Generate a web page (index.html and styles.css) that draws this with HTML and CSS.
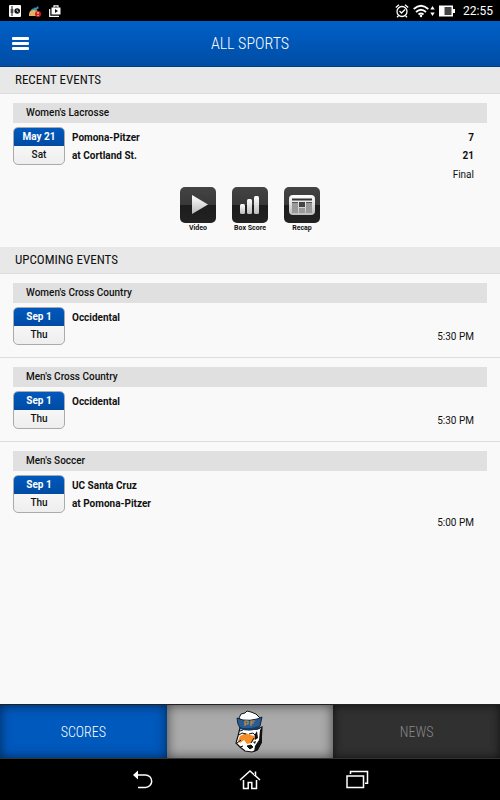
FILE: index.html
```html
<!DOCTYPE html>
<html lang="en">
  <head>
    <meta charset="utf-8">
    <meta name="viewport" content="width=device-width, initial-scale=1">
    <title>All Sports</title>
    <link rel="stylesheet" href="styles.css">
  </head>
  <body>
    <div class="status-bar">
      <div class="status-icons">
        <svg width="12" height="12" viewBox="0 0 12 12">
          <rect width="12" height="12" rx="1" fill="#fff"/>
          <path d="M3 1v10M1.500 5h3M1.500 7h3" stroke="#111" fill="none"/>
          <circle cx="8.200" cy="6" r="2.800" fill="#111"/>
          <path d="M8 4.500V6l1.500 1" stroke="#fff" stroke-width=".8" fill="none"/>
        </svg>
        <svg width="12" height="12" viewBox="0 0 12 12">
          <path d="M0 11Q-.5 5 5 4.500Q11 5 10 11z" fill="#dfb468"/>
          <path d="M2.500 5q3-2 4.500 0l2-3.500M5 3.500L9.500 3" stroke="#3b91ad" stroke-width="1.500" fill="none"/>
          <circle cx="9" cy="9" r="3" fill="#d81e18"/>
          <path d="M9 7v2M9 10v1" stroke="#fff"/>
        </svg>
        <svg width="12" height="12" viewBox="0 0 12 12">
          <path d="M2.500 2.500h9v7h-9z" fill="#fff"/>
          <path d="M5 2.500V.8h4v1.700M.7 4v7.300H10" stroke="#fff" stroke-width="1.200" fill="none"/>
          <path d="M6 4l3 2-3 2z" fill="#111"/>
        </svg>
      </div>
      <div class="status-icons status-right">
        <svg width="14" height="14" viewBox="0 0 14 14" fill="none" stroke="#fff" stroke-width="1.300">
          <circle cx="7" cy="7.500" r="5"/>
          <path d="M.8 3.500L4 .8M10 .8l3.200 2.700M2 13.300l1.500-1.500M12 13.300l-1.500-1.500M4.500 7l2 2L10 5.500"/>
        </svg>
        <svg width="16" height="14" viewBox="0 0 16 14" fill="none" stroke="#fff" stroke-width="1.700">
          <path d="M.7 5Q8-1.500 15.300 5M3 8q5-4.500 10 0M5.500 10.500q2.500-2 5 0"/>
          <circle cx="8" cy="12" r="1.200" fill="#fff" stroke="none"/>
        </svg>
        <svg class="data-arrows" width="5" height="10" viewBox="0 0 5 10" fill="#fff">
          <path d="M2.500 0L4.700 3.500H.3zM2.500 10L.3 6.500h4.400z"/>
        </svg>
        <svg width="16" height="12" viewBox="0 0 16 12">
          <path d="M0 .5h14V4h2v4h-2v3.500H0z" fill="#fff"/>
          <path d="M5.500 2h7v8h-7z" fill="#444"/>
        </svg>
        <span class="clock">22:55</span>
      </div>
    </div>

    <header class="header">
      <button class="menu-btn" aria-label="Menu">
        <span class="menu-line"></span>
        <span class="menu-line"></span>
        <span class="menu-line"></span>
      </button>
      <h1 class="title">ALL SPORTS</h1>
    </header>

    <main class="content">
      <section>
        <h2 class="section-title">RECENT EVENTS</h2>
        <div class="event">
          <h3 class="sport">Women's Lacrosse</h3>
          <div class="event-row">
            <div class="date">
              <div class="date-day">May 21</div>
              <div class="date-week">Sat</div>
            </div>
            <div class="game">
              <div class="team"><span>Pomona-Pitzer</span><span>7</span></div>
              <div class="team"><span>at Cortland St.</span><span>21</span></div>
              <div class="game-info">Final</div>
            </div>
          </div>
          <div class="actions">
            <button class="action">
              <span class="action-icon">
                <svg width="36" height="36" viewBox="0 0 36 36">
                  <path d="M12 8l16 9.500L12 27z" fill="url(#silver)"/>
                </svg>
              </span>
              Video
            </button>
            <button class="action">
              <span class="action-icon">
                <svg width="36" height="36" viewBox="0 0 36 36" fill="url(#silver)">
                  <rect x="8" y="17" width="5" height="10" rx="1.500"/>
                  <rect x="15" y="12" width="5" height="15" rx="1.500"/>
                  <rect x="22" y="9" width="5" height="18" rx="1.500"/>
                </svg>
              </span>
              Box Score
            </button>
            <button class="action">
              <span class="action-icon">
                <svg width="36" height="36" viewBox="0 0 36 36">
                  <defs>
                    <linearGradient id="silver" x2="0" y2="1">
                      <stop offset="0" stop-color="#fff"/>
                      <stop offset="1" stop-color="#bbb"/>
                    </linearGradient>
                  </defs>
                  <rect x="5" y="8" width="26" height="20" rx="4" fill="url(#silver)"/>
                  <path d="M8 12.500h20" stroke="#333" stroke-width="2"/>
                  <path d="M8 15h6v11H8zM22 15h6v11h-6z" fill="#999"/>
                  <path d="M15 15h6v5h-6z" fill="#444"/>
                  <path d="M15 21h6v5h-6z" fill="#999"/>
                  <path d="M8 15.500h6M22 15.500h6" stroke="#555"/>
                </svg>
              </span>
              Recap
            </button>
          </div>
        </div>
      </section>

      <section>
        <h2 class="section-title">UPCOMING EVENTS</h2>
        <div class="event">
          <h3 class="sport">Women's Cross Country</h3>
          <div class="event-row">
            <div class="date">
              <div class="date-day">Sep 1</div>
              <div class="date-week">Thu</div>
            </div>
            <div class="game">
              <div class="team"><span>Occidental</span></div>
              <div class="game-info">5:30 PM</div>
            </div>
          </div>
        </div>
        <div class="event">
          <h3 class="sport">Men's Cross Country</h3>
          <div class="event-row">
            <div class="date">
              <div class="date-day">Sep 1</div>
              <div class="date-week">Thu</div>
            </div>
            <div class="game">
              <div class="team"><span>Occidental</span></div>
              <div class="game-info">5:30 PM</div>
            </div>
          </div>
        </div>
        <div class="event">
          <h3 class="sport">Men's Soccer</h3>
          <div class="event-row">
            <div class="date">
              <div class="date-day">Sep 1</div>
              <div class="date-week">Thu</div>
            </div>
            <div class="game">
              <div class="team"><span>UC Santa Cruz</span></div>
              <div class="team"><span>at Pomona-Pitzer</span></div>
              <div class="game-info">5:00 PM</div>
            </div>
          </div>
        </div>
      </section>
    </main>

    <nav class="tabs">
      <button class="tab tab-active">SCORES</button>
      <button class="tab tab-logo" aria-label="Home">
        <svg width="30" height="44" viewBox="0 0 30 44">
          <path d="M5 18L3 26 1 33l4 4 5 4 7 1 5-2 4-7 1-16-4 2z" fill="#fff" stroke="#111" stroke-width="1.200"/>
          <path d="M25 20l2-3v15l-4 8-4 2 1-6 4-6z" fill="#111"/>
          <path d="M22 21q-4 5-2 9l3-2zM18 32l3-1-1 3z" fill="#111"/>
          <path d="M3 31l2-5 6-3 4 2 5 1-1 4-3 3-4 1-3-4-4 3z" fill="#f58e28"/>
          <path d="M4 25l3-2 4 1M14 24l4-1 2 2M5 21l3-1M19 28l-3 5" stroke="#111" fill="none"/>
          <path d="M2 33l4-3M5 37l3-1M12 36l4-1 2 2-3 2z" stroke="#111" fill="#111"/>
          <path d="M4 8l2-4 4-1 2-2 4 1 5 2 4 4-3 3H7z" fill="#fff" stroke="#111"/>
          <path d="M2 8l6 2q7 1 14-1l5-2-2 9-2 3q-9 2-18-1l-2-4z" fill="#285c93" stroke="#17243a"/>
          <path d="M4 17q9 3 20-1l-1 3q-9 3-18 0z" fill="#17385f"/>
          <path d="M10 16v-5h3v3h-3M16 16v-5h4M16 13h3" fill="none" stroke="#c79245" stroke-width="1.200"/>
        </svg>
      </button>
      <button class="tab tab-news">NEWS</button>
    </nav>

    <div class="nav-bar">
      <button class="nav-btn" aria-label="Back">
        <svg width="24" height="22" viewBox="0 0 24 22">
          <path d="M5 6h9.500a6.200 6.200 0 0 1 0 12.400H7" fill="none" stroke="#fff" stroke-width="1.500"/>
          <path d="M2 6l5-4.500v9z" fill="#fff"/>
        </svg>
      </button>
      <button class="nav-btn" aria-label="Home">
        <svg width="24" height="22" viewBox="0 0 24 22" fill="none" stroke="#fff" stroke-width="1.500">
          <path d="M2 11l10-9 10 9M5.500 11v8.500h4.700v-6h3.600v6h4.700V11M17.500 6.500V2.500"/>
        </svg>
      </button>
      <button class="nav-btn" aria-label="Recent apps">
        <svg width="24" height="22" viewBox="0 0 24 22" fill="none" stroke="#fff" stroke-width="1.500">
          <path d="M2 7h16.500v11.500H2zM5.500 5V2.500h17v11.800H20"/>
        </svg>
      </button>
    </div>
  </body>
</html>
```

FILE: styles.css
```css
* {
  box-sizing: border-box;
}
body {
  margin: 0;
  min-height: 100vh;
  display: flex;
  flex-direction: column;
  background-color: #f9f9f9;
  color: #111;
  font-family: Roboto, "Liberation Sans", sans-serif;
  font-size: 10px;
}
button {
  border: none;
  padding: 0;
  background: none;
  color: inherit;
  font-family: inherit;
}
svg {
  display: block;
}
.title,
.section-title,
.tab {
  font-family: "Roboto Condensed", "Liberation Sans Narrow", Roboto, sans-serif;
  font-weight: normal;
}
.status-bar {
  height: 21px;
  padding: 0 7px 0 9px;
  display: flex;
  align-items: center;
  justify-content: space-between;
  background-color: #000;
  color: #fff;
}
.status-icons {
  display: flex;
  align-items: center;
  gap: 8px;
}
.status-right {
  gap: 4px;
}
.data-arrows {
  margin-left: -3px;
}
.clock {
  margin-left: 4px;
  font-size: 12px;
}
.header {
  height: 46px;
  padding: 0 12px;
  display: grid;
  grid-template-columns: 24px 1fr 24px;
  align-items: center;
  background-image: linear-gradient(#0060c8, #004da5);
  border-bottom: 1px solid #053c7c;
  color: #fff;
}
.menu-btn {
  height: 24px;
  display: flex;
  flex-direction: column;
  justify-content: center;
  gap: 2px;
}
.menu-line {
  width: 17px;
  height: 3px;
  border-radius: 1px;
  background-color: #fff;
}
.title {
  margin: 0;
  font-size: 16px;
  font-weight: 300;
  text-align: center;
}
.content {
  flex: 1;
}
.section-title {
  margin: 0;
  padding: 0 15px;
  height: 27px;
  line-height: 25px;
  font-size: 13px;
  background-color: #e8e8e8;
  border-bottom: 1px solid #dcdcdc;
}
.event {
  padding: 9px 13px 11px;
}
.event + .event {
  border-top: 1px solid #ddd;
}
.sport {
  margin: 0 0 4px;
  padding: 0 13px;
  font-size: 10px;
  line-height: 20px;
  font-weight: 500;
  background-color: #e0e0e0;
}
.event-row {
  display: flex;
  align-items: flex-start;
  gap: 7px;
}
.date {
  width: 52px;
  height: 38px;
  border: 1px solid #aaa;
  border-radius: 5px;
  overflow: hidden;
  text-align: center;
  line-height: 18px;
  font-weight: 500;
  background-image: linear-gradient(#fff, #eee);
}
.date-day {
  background-image: linear-gradient(#0059bd, #004ba3);
  color: #fff;
  font-weight: bold;
}
.game {
  flex: 1;
  padding: 2px 13px 0 0;
  line-height: 18px;
}
.team {
  display: flex;
  justify-content: space-between;
  font-weight: bold;
}
.game-info {
  margin-top: 1px;
  text-align: right;
}
.actions {
  margin: 3px 0;
  display: flex;
  justify-content: center;
  gap: 8px;
}
.action {
  width: 44px;
  display: flex;
  flex-direction: column;
  align-items: center;
  font-size: 7px;
  line-height: 10px;
  font-weight: bold;
}
.action-icon {
  border-radius: 5px;
  background-image: linear-gradient(#444 0%, #383838 50%, #1c1c1c 51%, #222 100%);
}
.tabs {
  height: 55px;
  display: grid;
  grid-template-columns: 1fr 1fr 1fr;
  border-top: 1px solid #222;
  border-bottom: 1px solid #333;
}
.tab {
  font-size: 14px;
  font-weight: 300;
  background-color: #303030;
  box-shadow: inset 0 0 10px #111;
  color: #888;
}
.tab-active {
  background-color: #0059bd;
  box-shadow: inset 0 0 12px #002653;
  color: #fff;
}
.tab-logo {
  display: flex;
  align-items: center;
  justify-content: center;
  background-color: #aaa;
  box-shadow: inset 0 0 12px #444;
}
.nav-bar {
  height: 41px;
  display: flex;
  align-items: center;
  justify-content: center;
  gap: 83px;
  background-color: #000;
}
```
